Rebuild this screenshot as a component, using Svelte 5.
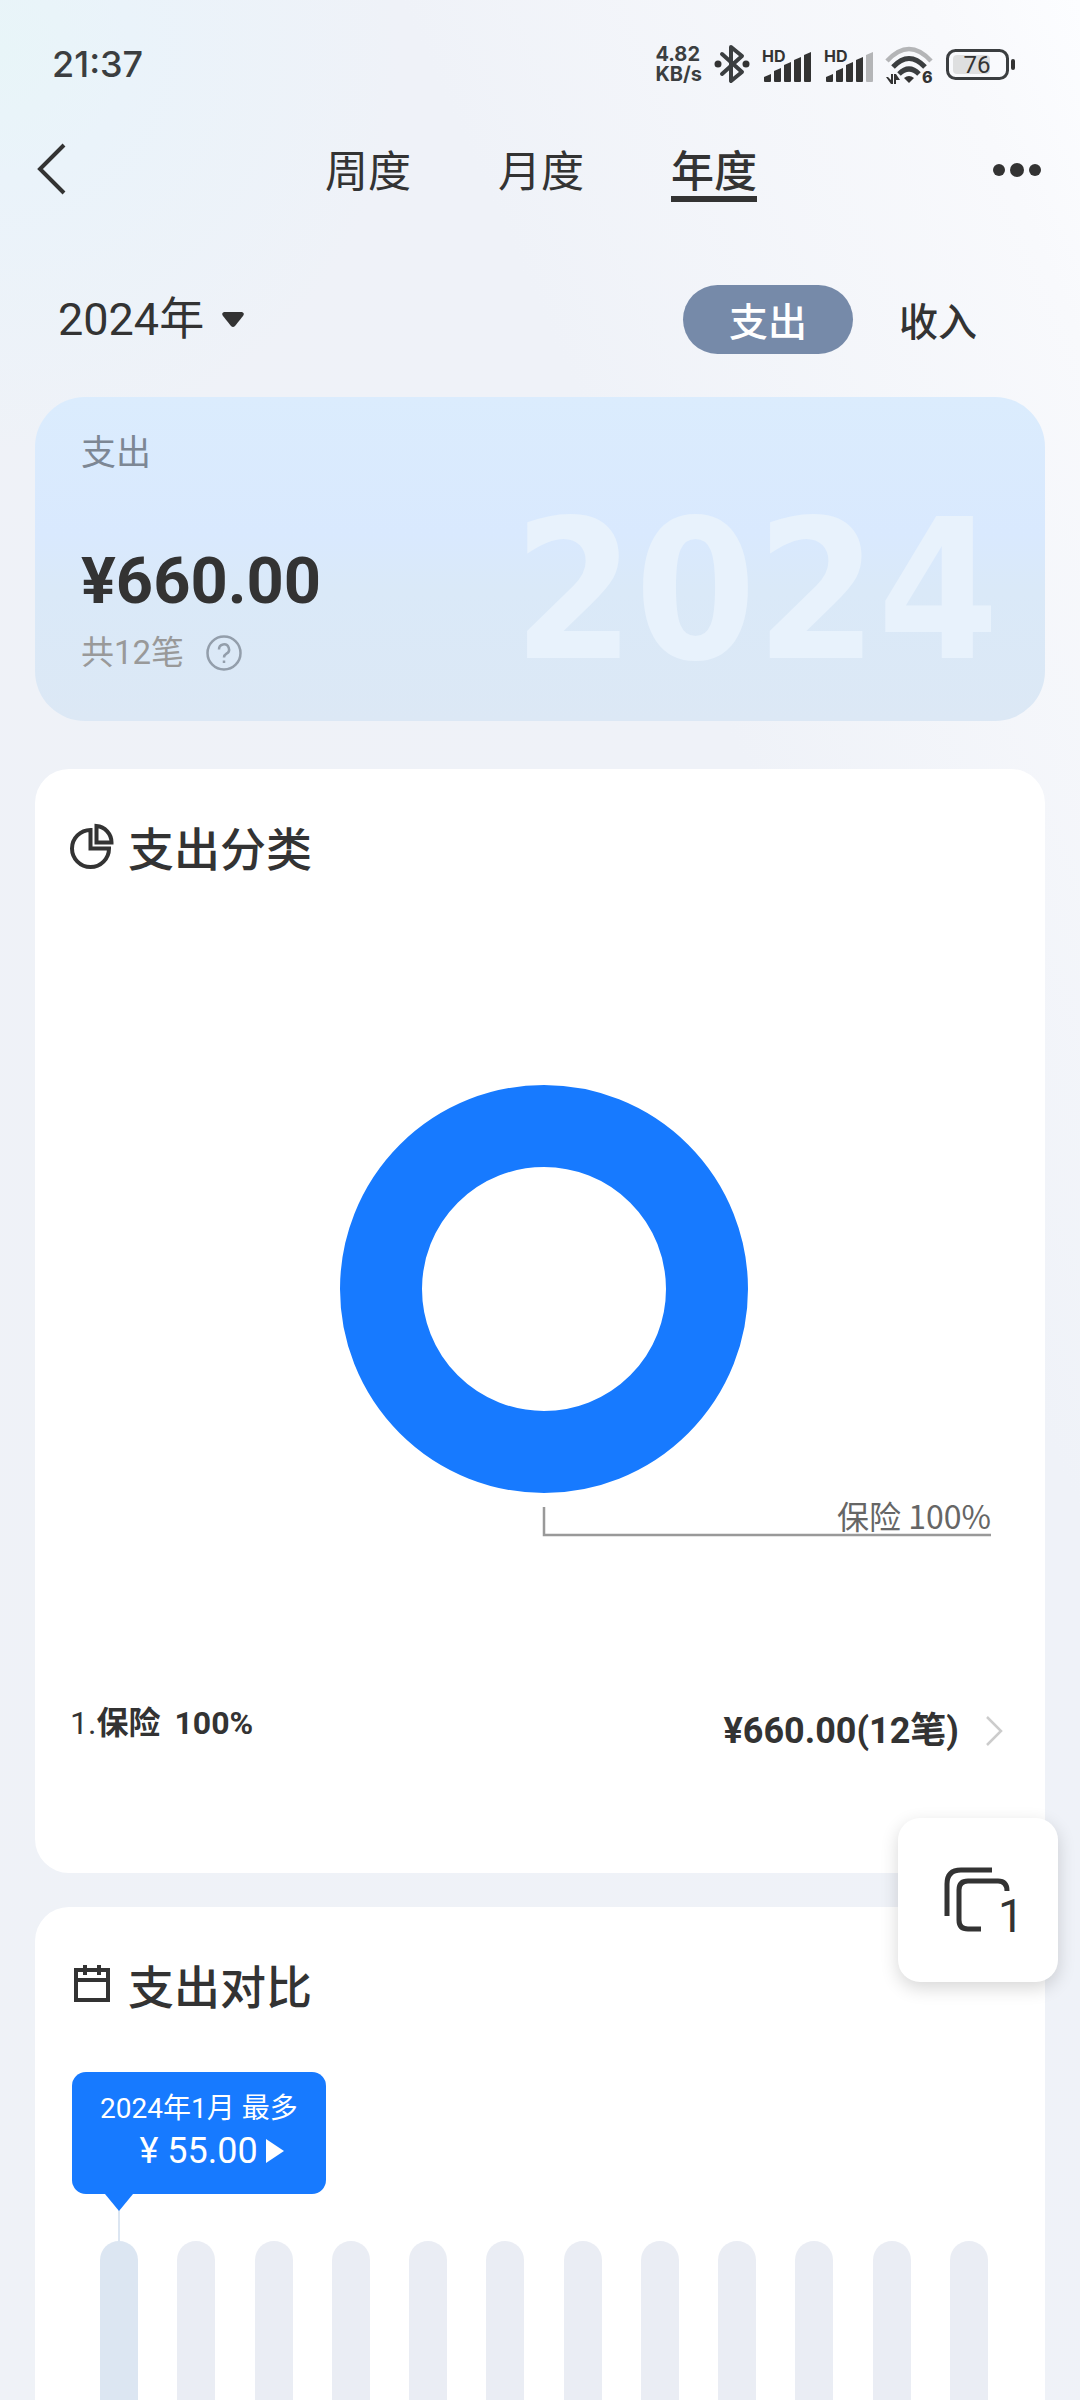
<script lang="ts">
  const tabs = ['周度', '月度', '年度'];
  const months = Array.from({ length: 12 }, (_, i) => i + 1);
  const levels = [8, 14, 20, 25, 30];

  let tab = $state('年度');
  let kind = $state('支出');
  let selected = $state(1);
</script>

{#snippet signal(strength: number)}
  <svg width="50" height="40" viewBox="0 0 50 40" aria-hidden="true">
    <text x="0" y="18" class="hd">HD</text>
    {#each levels as h, i (h)}
      <path
        d="M{2 + i * 10} {41 - h}L{9 + i * 10} {38 - h}V37q0 1-1 1H{3 + i * 10}q-1 0-1-1Z"
        class:off={i >= strength}
      />
    {/each}
  </svg>
{/snippet}

<div class="page">
  <header>
    <div class="status">
      <span class="clock">21:37</span>
      <div class="indicators">
        <div class="speed">
          <span>4.82</span>
          <span>KB/s</span>
        </div>
        <svg width="36" height="40" viewBox="0 0 36 40" aria-hidden="true">
          <path
            d="M8 10L28 28L17 37V3L28 12L8 30"
            fill="none"
            stroke="#3b3e40"
            stroke-width="4"
            stroke-linejoin="round"
            stroke-linecap="round"
          />
          <circle cx="4" cy="20" r="3.5" />
          <circle cx="32" cy="20" r="3.5" />
        </svg>
        {@render signal(5)}
        {@render signal(4)}
        <svg width="48" height="40" viewBox="0 0 48 40" aria-hidden="true">
          <path d="M1 17Q23 -7 45 17" fill="none" stroke="#b4b5b7" stroke-width="4.5" />
          <path d="M7 23Q23 6 39 23" fill="none" stroke="#3b3e40" stroke-width="5" />
          <path d="M13 30Q23 20 33 30" fill="none" stroke="#3b3e40" stroke-width="5" />
          <path d="M18 34Q23 30 28 34L23 39Z" />
          <path d="M0 33h2l3 3V30h2v10H5zM8 40V30h2l4 6h-4v4z" />
          <text x="36" y="39" class="gen">6</text>
        </svg>
        <svg width="70" height="40" viewBox="0 0 70 40" aria-hidden="true">
          <rect x="1.5" y="6.5" width="60" height="28" rx="8" fill="none" stroke="#3b3e40" stroke-width="3" />
          <rect x="7" y="11" width="37" height="19" rx="4" fill="#dedfe0" />
          <rect x="65" y="15" width="4" height="11" rx="2" />
          <text x="31" y="29" text-anchor="middle" class="charge">76</text>
        </svg>
      </div>
    </div>

    <nav>
      <button class="icon-btn" aria-label="返回">
        <svg width="32" height="52" viewBox="0 0 32 52">
          <path d="M29 2L5 26L29 50" fill="none" stroke="#333" stroke-width="4" />
        </svg>
      </button>
      <div class="tabs" role="tablist">
        {#each tabs as t (t)}
          <button role="tab" aria-selected={tab === t} class:active={tab === t} onclick={() => (tab = t)}>{t}</button>
        {/each}
      </div>
      <button class="icon-btn" aria-label="更多">
        <svg width="48" height="52" viewBox="0 0 48 52">
          <circle cx="6" cy="27" r="6" />
          <circle cx="24" cy="27" r="7" />
          <circle cx="42" cy="27" r="6" />
        </svg>
      </button>
    </nav>
  </header>

  <div class="filters">
    <button class="year">
      <span>2024年</span>
      <svg width="22" height="16" viewBox="0 0 22 16"><path d="M2 0H20Q23 1 21 4L13 14Q11 16 9 14L1 4Q-1 1 2 0Z" /></svg>
    </button>
    <div class="kinds">
      {#each ['支出', '收入'] as k (k)}
        <button aria-pressed={kind === k} class:active={kind === k} onclick={() => (kind = k)}>{k}</button>
      {/each}
    </div>
  </div>

  <main>
    <section class="summary">
      <div class="figures">
        <span class="label">支出</span>
        <strong>¥660.00</strong>
        <span class="count">
          共12笔
          <button class="icon-btn" aria-label="说明">
            <svg width="36" height="36" viewBox="0 0 36 36" fill="none" stroke="#939eab" stroke-width="2.5">
              <circle cx="18" cy="18" r="16.5" />
              <path d="M13 14.5a5 5 0 1 1 7.5 4.2q-2.5 1.5-2.5 3.8" />
              <path d="M18 25.5v2.5" />
            </svg>
          </button>
        </span>
      </div>
      <span class="backdrop" aria-hidden="true">2024</span>
    </section>

    <section class="card">
      <h2>
        <svg width="44" height="46" viewBox="0 0 44 46" fill="none" stroke="#333" stroke-width="4">
          <path d="M20.5 7A18.5 18.5 0 1 0 39 25.5H20.5Z" />
          <path d="M26.5 3V19.5H41.5A16.5 16.5 0 0 0 26.5 3Z" />
        </svg>
        支出分类
      </h2>
      <svg class="donut" viewBox="0 0 1010 560" role="img" aria-label="保险 100%">
        <circle cx="509" cy="264" r="163" fill="none" stroke="#177aff" stroke-width="82" />
        <path d="M509 482V510H956" fill="none" stroke="#999" stroke-width="2.5" />
        <text x="956" y="504" text-anchor="end">保险 100%</text>
      </svg>
      <a class="category" href="#insurance">
        <span>1.<b>保险</b><b class="share">100%</b></span>
        <span class="amount">
          <b>¥660.00(12笔)</b>
          <svg width="18" height="32" viewBox="0 0 18 32"><path d="M2 2L16 16L2 30" fill="none" stroke="#ccc" stroke-width="2.5" /></svg>
        </span>
      </a>
    </section>

    <section class="card compare">
      <h2>
        <svg width="44" height="46" viewBox="0 0 44 46" fill="none" stroke="#333" stroke-width="4">
          <path d="M6 9H38V39H6ZM6 19H38M15 4V14M29 4V14" />
        </svg>
        支出对比
      </h2>
      <button class="bubble">
        <span class="when">2024年{selected}月 最多</span>
        <span class="sum">
          ¥ 55.00
          <svg width="18" height="24" viewBox="0 0 18 24"><path d="M0 0L18 12L0 24Z" fill="#fff" /></svg>
        </span>
      </button>
      <div class="bars">
        {#each months as m (m)}
          <button aria-label="{m}月" class:active={selected === m} onclick={() => (selected = m)}></button>
        {/each}
      </div>
    </section>
  </main>

  <button class="floating" aria-label="窗口 1">
    <svg width="80" height="80" viewBox="0 0 80 80" fill="none" stroke="#333" stroke-width="5">
      <path d="M9 56V24Q9 10 23 10H54" />
      <path d="M43 69H30Q21 69 21 60V30Q21 21 30 21H60Q69 21 69 31" />
      <text x="60" y="72">1</text>
    </svg>
  </button>
</div>

<style>
  :global(body) {
    margin: 0;
    background: #eff2f7;
  }
  .page {
    --ink: #333;
    --blue: #177aff;
    --num: Roboto, 'Noto Sans CJK SC', sans-serif;
    position: relative;
    display: flex;
    flex-direction: column;
    box-sizing: border-box;
    min-height: 100vh;
    color: var(--ink);
    font-family: 'Noto Sans CJK SC', sans-serif;
    background:
      radial-gradient(circle at 0 50px, #e8f5f8 0, #eaf3fa 130px, transparent 400px),
      linear-gradient(to bottom left, #fcfdff 0, #f8f9fc 140px, #eff2f8 620px, #eff2f7 100%);
  }
  button {
    padding: 0;
    border: 0;
    background: none;
    color: inherit;
    font: inherit;
    cursor: pointer;
  }
  svg {
    display: block;
    flex: none;
    overflow: visible;
  }
  svg:not([fill]) {
    fill: var(--ink);
  }
  .icon-btn {
    display: flex;
  }

  .status {
    display: flex;
    align-items: center;
    justify-content: space-between;
    height: 128px;
    padding: 0 64px 0 52px;
  }
  .clock {
    font-family: Inter, sans-serif;
    font-size: 36px;
    font-weight: 500;
    color: #3b3e40;
  }
  .indicators {
    display: flex;
    align-items: center;
    gap: 12px;
  }
  .speed {
    display: flex;
    flex-direction: column;
    font-family: Inter, sans-serif;
    font-size: 20px;
    font-weight: 700;
    line-height: 20px;
    color: #3b3e40;
  }
  .hd {
    font-family: Inter, sans-serif;
    font-size: 16px;
    font-weight: 700;
  }
  .gen {
    font-family: Inter, sans-serif;
    font-size: 16px;
    font-weight: 800;
  }
  .charge {
    font-family: Roboto, sans-serif;
    font-size: 24px;
  }
  .off {
    fill: #b4b5b7;
  }

  nav {
    display: grid;
    grid-template-columns: 1fr auto 1fr;
    align-items: center;
    height: 82px;
    padding: 0 39px 0 35px;
  }
  nav .icon-btn:last-child {
    justify-self: end;
  }
  .tabs {
    display: flex;
    gap: 87px;
    padding-left: 6px;
  }
  .tabs button {
    padding-top: 4px;
    border-bottom: 6px solid transparent;
    font-size: 43px;
    line-height: 56px;
  }
  .tabs .active {
    border-color: var(--ink);
    font-weight: 500;
  }

  .filters {
    display: flex;
    align-items: center;
    justify-content: space-between;
    margin-top: 75px;
    padding: 0 57px 0 58px;
  }
  .year {
    display: flex;
    align-items: center;
    gap: 18px;
    font-family: var(--num);
    font-size: 45px;
    line-height: 64px;
  }
  .kinds {
    display: flex;
  }
  .kinds button {
    padding: 0 46px;
    border-radius: 35px;
    font-size: 39px;
    font-weight: 500;
    line-height: 69px;
  }
  .kinds .active {
    background: #768aa9;
    color: #fff;
  }

  main {
    display: flex;
    flex: 1;
    flex-direction: column;
    gap: 34px;
    margin-top: 43px;
    padding: 0 35px;
  }
  .summary {
    display: flex;
    justify-content: space-between;
    min-height: 264px;
    margin-bottom: 14px;
    padding: 30px 46px;
    border-radius: 50px;
    background: linear-gradient(#dbecfd 0, #d9e9fe 42%, #dae9f8 60%, #dce8f5 100%);
  }
  .figures {
    display: flex;
    flex-direction: column;
    align-items: flex-start;
  }
  .label {
    color: #7d8794;
    font-size: 35px;
    line-height: 46px;
  }
  .figures strong {
    margin-top: 62px;
    font-family: var(--num);
    font-size: 65px;
    line-height: 92px;
  }
  .count {
    display: flex;
    align-items: center;
    gap: 22px;
    color: #999;
    font-size: 33px;
    line-height: 52px;
    font-family: var(--num);
  }
  .backdrop {
    align-self: flex-end;
    color: #e8f2fc;
    font-family: 'DejaVu Sans Condensed', 'DejaVu Sans', sans-serif;
    font-size: 194px;
    font-weight: 700;
    line-height: 200px;
  }

  .card {
    border-radius: 34px;
    background: #fff;
  }
  h2 {
    display: flex;
    align-items: center;
    gap: 14px;
    margin: 0;
    padding: 46px 35px 2px;
    font-size: 46px;
    font-weight: 500;
    line-height: 62px;
  }
  .donut {
    width: 100%;
    margin-top: 146px;
  }
  .donut text {
    fill: #666;
    font-size: 32px;
  }
  .category {
    display: flex;
    align-items: flex-start;
    justify-content: space-between;
    padding: 114px 42px 110px 35px;
    color: inherit;
    font-family: var(--num);
    font-size: 32px;
    line-height: 48px;
    text-decoration: none;
  }
  .share {
    margin-left: 14px;
  }
  .amount {
    display: flex;
    align-items: center;
    gap: 26px;
    font-size: 36px;
    line-height: 64px;
  }

  .compare {
    display: flex;
    flex: 1;
    flex-direction: column;
    align-items: flex-start;
    border-radius: 34px 34px 0 0;
  }
  .bubble {
    position: relative;
    display: flex;
    flex-direction: column;
    align-items: center;
    margin: 55px 0 0 37px;
    padding: 17px 28px 21px;
    border-radius: 14px;
    background: var(--blue);
    color: #fff;
    font-family: var(--num);
  }
  .bubble::before,
  .bubble::after {
    content: '';
    position: absolute;
    top: 100%;
    left: 33px;
  }
  .bubble::before {
    width: 2px;
    height: 48px;
    margin-left: 13px;
    background: #dce6f2;
  }
  .bubble::after {
    border: solid transparent;
    border-width: 17px 14px 0;
    border-top-color: var(--blue);
  }
  .when {
    font-size: 28px;
    line-height: 40px;
  }
  .sum {
    display: flex;
    align-items: center;
    align-self: flex-end;
    gap: 8px;
    padding-right: 14px;
    font-size: 36px;
    line-height: 44px;
  }
  .bars {
    display: flex;
    flex: 1;
    align-self: stretch;
    justify-content: space-between;
    min-height: 140px;
    margin-top: 47px;
    padding: 0 57px 0 65px;
  }
  .bars button {
    width: 38px;
    border-radius: 19px 19px 0 0;
    background: #eaedf4;
  }
  .bars .active {
    background: #dce6f2;
  }

  .floating {
    position: absolute;
    top: 1818px;
    right: 22px;
    padding: 42px 40px;
    border-radius: 22px;
    background: #fff;
    box-shadow: 0 6px 18px rgb(0 0 0 / 16%);
  }
  .floating text {
    fill: var(--ink);
    stroke: none;
    font-family: var(--num);
    font-size: 46px;
  }
</style>
